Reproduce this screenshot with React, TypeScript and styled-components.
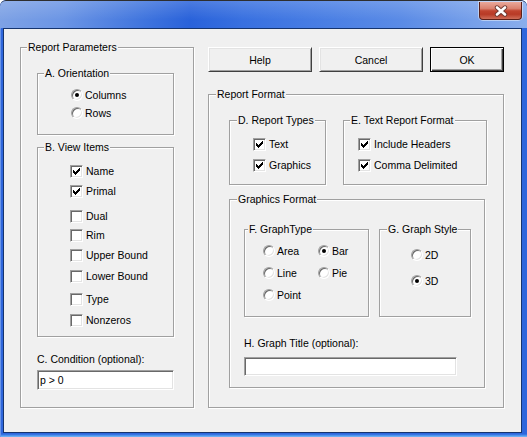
import React from "react";
import styled, { createGlobalStyle } from "styled-components";

const GlobalStyle = createGlobalStyle`
  html, body { margin: 0; padding: 0; background: #ffffff; }
  body { font-family: "Liberation Sans", Arial, sans-serif; font-size: 10.5px; color: #000; }
  *, *::before, *::after { box-sizing: border-box; }
`;

const Window = styled.div`
  width: 527px;
  height: 437px;
  display: flex;
  flex-direction: column;
  overflow: hidden;
  border-radius: 6px 6px 0 0;
  background: #2e66dc;
`;

const TitleBar = styled.div`
  flex: none;
  height: 28px;
  display: flex;
  justify-content: flex-end;
  align-items: flex-start;
  padding: 1px 5px 0 0;
  border-top: 1px solid #2e2e2e;
  border-radius: 6px 6px 0 0;
  background:
    linear-gradient(to bottom, rgba(255, 255, 255, 0.16), rgba(255, 255, 255, 0) 70%),
    linear-gradient(
      to right,
      #7ea2e5 0%,
      #6b95e5 12%,
      #4075de 27%,
      #2962da 36%,
      #3870e0 46%,
      #4a7fe4 62%,
      #5a8be6 76%,
      #77a0ea 90%,
      #8aaeec 100%
    );
`;

const CloseButton = styled.div`
  width: 43px;
  height: 18px;
  border: 1px solid #5b1f17;
  border-top: none;
  border-radius: 0 0 4px 4px;
  background: linear-gradient(
    to bottom,
    #eaa99b 0%,
    #da8270 38%,
    #c1442f 52%,
    #b83a26 72%,
    #cf6d58 100%
  );
  box-shadow: 0 0 0 1px rgba(255, 255, 255, 0.45);
  display: flex;
  align-items: center;
  justify-content: center;
`;

const FrameBody = styled.div`
  flex: 1;
  display: flex;
  padding: 0 5px 4px 3px;
  background: linear-gradient(
    to bottom,
    #2e66dc 0,
    #2e66dc calc(100% - 3px),
    #3f84e9 calc(100% - 2px),
    #78bcf5 100%
  );
  box-shadow: inset 1px 0 0 #6b95e8;
`;

const Client = styled.div`
  flex: 1;
  display: flex;
  align-items: stretch;
  gap: 14px;
  padding: 18px 17px 24px 16px;
  border: 1px solid #15346e;
  background: #f0f0f0;
`;

const GroupBox = styled.div<{ $w: number; $h?: number; $pt: number; $pl: number; $grow?: boolean }>`
  position: relative;
  flex: ${(p) => (p.$grow ? "1 1 auto" : "none")};
  width: ${(p) => p.$w}px;
  height: ${(p) => (p.$h ? `${p.$h}px` : "auto")};
  padding: ${(p) => p.$pt}px 0 0 ${(p) => p.$pl}px;
  border: 1px solid #a0a0a0;
  box-shadow: inset 1px 1px 0 #ffffff, 1px 1px 0 #ffffff;
  display: flex;
  flex-direction: column;
  align-items: flex-start;
`;

const Caption = styled.span<{ $x?: number }>`
  position: absolute;
  top: -7px;
  left: ${(p) => (p.$x ?? 8) - 2}px;
  padding: 0 1px;
  line-height: 13px;
  white-space: nowrap;
  background: #f0f0f0;
`;

const RightColumn = styled.div`
  width: 296px;
  display: flex;
  flex-direction: column;
`;

const ButtonRow = styled.div`
  display: flex;
  gap: 7px;
  height: 25px;
`;

const Button = styled.button<{ $w: number; $default?: boolean }>`
  width: ${(p) => p.$w}px;
  height: 25px;
  margin: 0;
  padding: 0;
  font-family: "Liberation Sans", Arial, sans-serif;
  font-size: 10.5px;
  color: #000;
  background: #f0f0f0;
  border: 1px solid;
  border-color: ${(p) => (p.$default ? "#000" : "#ffffff #404040 #404040 #ffffff")};
  box-shadow: ${(p) =>
    p.$default
      ? "inset 1px 1px 0 #ffffff, inset -1px -1px 0 #404040, inset -2px -2px 0 #a0a0a0"
      : "inset 1px 1px 0 #e3e3e3, inset -1px -1px 0 #a0a0a0"};
`;

const Row = styled.div<{ $gap?: number }>`
  display: flex;
  gap: ${(p) => p.$gap ?? 0}px;
`;

const OptionList = styled.div<{ $gap: number }>`
  display: flex;
  flex-direction: column;
  gap: ${(p) => p.$gap}px;
`;

const OptionGrid = styled.div`
  display: grid;
  grid-template-columns: 55px auto;
  row-gap: 6px;
`;

const Option = styled.label<{ $mt?: number }>`
  display: flex;
  align-items: center;
  gap: 3px;
  height: 16px;
  margin-top: ${(p) => p.$mt ?? 0}px;
  white-space: nowrap;
  line-height: 13px;
`;

const CheckBox = styled.span`
  flex: none;
  width: 13px;
  height: 13px;
  display: flex;
  align-items: center;
  justify-content: center;
  background: #ffffff;
  border: 1px solid;
  border-color: #a0a0a0 #ffffff #ffffff #a0a0a0;
  box-shadow: inset 1px 1px 0 #696969, inset -1px -1px 0 #e3e3e3;
`;

const RadioCircle = styled.span<{ $on: boolean }>`
  flex: none;
  width: 12px;
  height: 12px;
  margin-right: -1px;
  border-radius: 50%;
  display: flex;
  align-items: center;
  justify-content: center;
  background: #ffffff;
  border: 1px solid;
  border-color: #a0a0a0 #ffffff #ffffff #a0a0a0;
  box-shadow: inset 1px 1px 0 #696969, inset -1px -1px 0 #e3e3e3;

  &::after {
    content: "";
    display: ${(p) => (p.$on ? "block" : "none")};
    width: 4px;
    height: 4px;
    border-radius: 50%;
    background: #000;
  }
`;

const FieldLabel = styled.div<{ $mt: number }>`
  margin-top: ${(p) => p.$mt}px;
  line-height: 13px;
  height: 13px;
  white-space: nowrap;
`;

const TextField = styled.input<{ $w: number; $h: number; $mt: number }>`
  width: ${(p) => p.$w}px;
  height: ${(p) => p.$h}px;
  margin: ${(p) => p.$mt}px 0 0 0;
  padding: 0 2px;
  font-family: "Liberation Sans", Arial, sans-serif;
  font-size: 10.5px;
  color: #000;
  background: #ffffff;
  outline: none;
  border: 1px solid;
  border-color: #a0a0a0 #ffffff #ffffff #a0a0a0;
  box-shadow: inset 1px 1px 0 #696969, inset -1px -1px 0 #e3e3e3;
`;

const CHECK_COLS = [2, 3, 4, 3, 2, 1, 0];

function CheckMark() {
  return (
    <svg width="7" height="7" viewBox="0 0 7 7">
      {CHECK_COLS.map((y, x) => (
        <rect key={x} x={x} y={y} width="1" height="3" fill="#000" />
      ))}
    </svg>
  );
}

function Check({ label, checked, mt }: { label: string; checked?: boolean; mt?: number }) {
  return (
    <Option $mt={mt}>
      <CheckBox>{checked ? <CheckMark /> : null}</CheckBox>
      <span>{label}</span>
    </Option>
  );
}

function Radio({ label, checked }: { label: string; checked?: boolean }) {
  return (
    <Option>
      <RadioCircle $on={!!checked} />
      <span>{label}</span>
    </Option>
  );
}

function CloseGlyph() {
  return (
    <svg width="16" height="12" viewBox="0 0 16 12">
      <path d="M4 2.5 L12 9.5 M12 2.5 L4 9.5" stroke="#6e3a33" strokeWidth="4.4" strokeLinecap="round" fill="none" />
      <path d="M4 2.5 L12 9.5 M12 2.5 L4 9.5" stroke="#ffffff" strokeWidth="2.6" strokeLinecap="round" fill="none" />
    </svg>
  );
}

export default function App() {
  return (
    <>
      <GlobalStyle />
      <Window>
        <TitleBar>
          <CloseButton>
            <CloseGlyph />
          </CloseButton>
        </TitleBar>
        <FrameBody>
          <Client>
            <GroupBox $w={174} $pt={25} $pl={16}>
              <Caption>Report Parameters</Caption>

              <GroupBox $w={137} $h={62} $pt={13} $pl={33}>
                <Caption>A. Orientation</Caption>
                <OptionList $gap={2}>
                  <Radio label="Columns" checked />
                  <Radio label="Rows" />
                </OptionList>
              </GroupBox>

              <div style={{ height: 12 }} />

              <GroupBox $w={137} $h={190} $pt={15} $pl={32}>
                <Caption>B. View Items</Caption>
                <Check label="Name" checked />
                <Check label="Primal" checked mt={4} />
                <Check label="Dual" mt={9} />
                <Check label="Rim" mt={3} />
                <Check label="Upper Bound" mt={4} />
                <Check label="Lower Bound" mt={5} />
                <Check label="Type" mt={7} />
                <Check label="Nonzeros" mt={5} />
              </GroupBox>

              <FieldLabel $mt={16}>C. Condition (optional):</FieldLabel>
              <TextField $w={137} $h={20} $mt={4} defaultValue="p > 0" />
            </GroupBox>

            <RightColumn>
              <ButtonRow>
                <Button $w={104}>Help</Button>
                <Button $w={104}>Cancel</Button>
                <Button $w={74} $default>
                  OK
                </Button>
              </ButtonRow>

              <div style={{ height: 22 }} />

              <GroupBox $w={296} $grow $pt={25} $pl={20}>
                <Caption $x={9}>Report Format</Caption>

                <Row $gap={17}>
                  <GroupBox $w={97} $h={65} $pt={15} $pl={23}>
                    <Caption $x={9}>D. Report Types</Caption>
                    <OptionList $gap={5}>
                      <Check label="Text" checked />
                      <Check label="Graphics" checked />
                    </OptionList>
                  </GroupBox>
                  <GroupBox $w={144} $h={65} $pt={15} $pl={14}>
                    <Caption>E. Text Report Format</Caption>
                    <OptionList $gap={5}>
                      <Check label="Include Headers" checked />
                      <Check label="Comma Delimited" checked />
                    </OptionList>
                  </GroupBox>
                </Row>

                <div style={{ height: 14 }} />

                <GroupBox $w={256} $h={189} $pt={29} $pl={14}>
                  <Caption $x={9}>Graphics Format</Caption>
                  <Row $gap={10}>
                    <GroupBox $w={125} $h={88} $pt={13} $pl={18}>
                      <Caption $x={5}>F. GraphType</Caption>
                      <OptionGrid>
                        <Radio label="Area" />
                        <Radio label="Bar" checked />
                        <Radio label="Line" />
                        <Radio label="Pie" />
                        <Radio label="Point" />
                      </OptionGrid>
                    </GroupBox>
                    <GroupBox $w={92} $h={88} $pt={17} $pl={31}>
                      <Caption $x={9}>G. Graph Style</Caption>
                      <OptionList $gap={10}>
                        <Radio label="2D" />
                        <Radio label="3D" checked />
                      </OptionList>
                    </GroupBox>
                  </Row>
                  <FieldLabel $mt={20}>H. Graph Title (optional):</FieldLabel>
                  <TextField $w={213} $h={19} $mt={7} defaultValue="" />
                </GroupBox>
              </GroupBox>
            </RightColumn>
          </Client>
        </FrameBody>
      </Window>
    </>
  );
}
